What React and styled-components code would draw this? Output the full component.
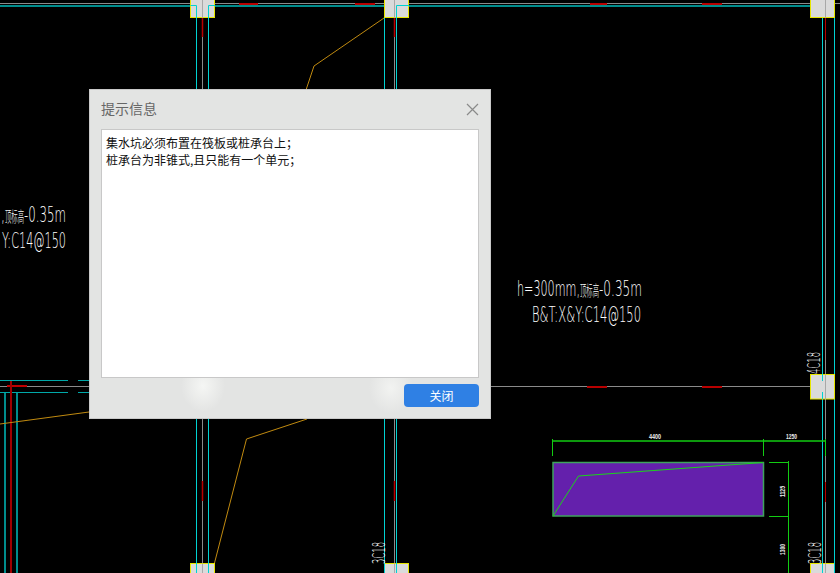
import React from "react";
import styled, { createGlobalStyle } from "styled-components";

const GlobalStyle = createGlobalStyle`
  html, body {
    margin: 0;
    padding: 0;
    background: #000;
  }
  body {
    font-family: "Noto Sans CJK SC", "Liberation Sans", sans-serif;
  }
`;

const CYAN = "#00d2d2";
const TEAL = "#008c8c";
const GREY = "#8a8a8a";
const RED = "#b80000";
const ORANGE = "#c08a10";
const GREEN = "#12cc12";
const YELLOW = "#e6e600";

/* column heads: box position, and which stretches of cyan run over the box */
const columns = [
  { x: 190.5, y: -7, grey: 202.5, cyan: [[196.5, 5.5, 18], [208.5, 5.5, 18]] },
  { x: 384.5, y: -7, grey: 394.5, cyan: [[396.5, 5.5, 18]] },
  { x: 810.5, y: -7, grey: 825.5, cyan: [] },
  { x: 810.5, y: 374.5, grey: 825.5, cyan: [[822.5, 374, 381], [822.5, 392, 399]] },
  { x: 190.5, y: 563.5, grey: 202.5, cyan: [[196.5, 563, 573], [208.5, 563, 573]] },
  { x: 384.5, y: 563.5, grey: 394.5, cyan: [[384.5, 563, 573], [396.5, 563, 573]] },
  { x: 810.5, y: 563.5, grey: 825.5, cyan: [[822.5, 563, 573], [834.5, 563, 573]] },
];

const lines = [
  // top beam
  [0, 3.5, 840, 3.5, GREY, 1],
  [0, 6, 190, 6, TEAL, 2],
  [215, 6, 384, 6, TEAL, 2],
  [409, 6, 811, 6, TEAL, 2],
  [239, 4, 258, 4, RED, 2],
  [355, 4, 375, 4, RED, 2],
  [590, 4, 607, 4, RED, 2],
  [702, 4, 722, 4, RED, 2],
  // verticals
  [196.5, 18, 196.5, 564, CYAN, 1],
  [208.5, 18, 208.5, 564, CYAN, 1],
  [202.5, 18, 202.5, 564, GREY, 1],
  [384.5, 18, 384.5, 564, CYAN, 1],
  [396.5, 18, 396.5, 564, CYAN, 1],
  [394.5, 18, 394.5, 564, GREY, 1],
  [822.5, 18, 822.5, 573, CYAN, 1],
  [834.5, 18, 834.5, 573, CYAN, 1],
  [825.5, 18, 825.5, 573, GREY, 1],
  [202.5, 18, 202.5, 37, RED, 1.5],
  [202.5, 481, 202.5, 501, RED, 1.5],
  [394.5, 18, 394.5, 37, RED, 1.5],
  [394.5, 481, 394.5, 501, RED, 1.5],
  [825.5, 18, 825.5, 40, RED, 1],
  [825.5, 482, 825.5, 502, RED, 1],
  // middle beam
  [0, 386.5, 811, 386.5, GREY, 1],
  [7, 386, 27, 386, "#c00000", 2],
  [587, 387, 607, 387, RED, 2],
  [702, 387, 722, 387, RED, 2],
  [0, 380.5, 68, 380.5, "#00a8a8", 1],
  [78, 380.5, 90, 380.5, "#00a8a8", 1],
  [0, 392.5, 68, 392.5, "#00a8a8", 1],
  [78, 392.5, 90, 392.5, "#00a8a8", 1],
  [5, 393, 5, 573, TEAL, 2],
  [11, 381, 11, 573, "#a00000", 2],
  [17, 393, 17, 573, TEAL, 2],
  // dimensions
  [553, 441, 825, 441, GREEN, 1.5],
  [552.5, 439, 552.5, 456, GREEN, 1],
  [763.5, 439, 763.5, 456, GREEN, 1],
  [825.5, 439, 825.5, 456, GREEN, 1],
  [788.5, 461, 788.5, 573, GREEN, 1],
  [769, 462.5, 789, 462.5, GREEN, 1],
  [769, 516.5, 789, 516.5, GREEN, 1],
];

/* drawn after the column boxes, the cyan caps run into them */
const caps = [
  [190.5, 5.5, 196.5, 5.5],
  [208.5, 5.5, 215, 5.5],
  [396.5, 5.5, 409, 5.5],
];

const orangeRuns = [
  "0,424 89,412",
  "306,90 314,66 384,18",
  "307,419 246.5,439 214.5,563",
];

/* CAD font is very narrow: nat is the width of the run before squeezing to w */
const notes = [
  { x: 517, y: 295.5, w: 63, nat: 119, size: 21, t: "h=300mm," },
  { x: 580, y: 295.5, w: 19, nat: 45, size: 15, t: "顶标高" },
  { x: 599, y: 295.5, w: 43, nat: 75, size: 21, t: "-0.35m" },
  { x: 532, y: 322, w: 109, nat: 190, size: 21, t: "B&T:X&Y:C14@150" },
  { x: 1, y: 222, w: 4, nat: 7, size: 21, t: "," },
  { x: 5, y: 222, w: 19, nat: 45, size: 15, t: "顶标高" },
  { x: 24, y: 222, w: 42, nat: 75, size: 21, t: "-0.35m" },
  { x: 2, y: 248, w: 64, nat: 114, size: 21, t: "Y:C14@150" },
];

const dims = [
  { x: 649, y: 439, w: 12, t: "4400" },
  { x: 786, y: 439, w: 11, t: "1250" },
];

const turned = [
  { x: 385, y: 564, w: 22, size: 17, t: "3C18" },
  { x: 821, y: 564, w: 22, size: 17, t: "3C18" },
  { x: 820, y: 374, w: 22, size: 17, t: "4C18" },
];

const turnedDims = [
  { x: 785, y: 497, w: 11, t: "1125" },
  { x: 785, y: 555, w: 11, t: "1300" },
];

const CadDrawing = () => (
  <Drawing viewBox="0 0 840 573" width="840" height="573">
    {lines.map(([x1, y1, x2, y2, color, w], i) => (
      <line key={i} x1={x1} y1={y1} x2={x2} y2={y2} stroke={color} strokeWidth={w} />
    ))}
    {orangeRuns.map((points) => (
      <polyline key={points} points={points} fill="none" stroke={ORANGE} strokeWidth="1" />
    ))}
    {columns.map((c, i) => (
      <g key={i}>
        <rect x={c.x} y={c.y} width="24" height="24.5" fill="#dadada" stroke={YELLOW} strokeWidth="1" />
        <line x1={c.grey} y1={c.y} x2={c.grey} y2={c.y + 25} stroke="#a8a8a8" />
        {c.cyan.map(([x, y1, y2]) => (
          <line key={y1 + "-" + x} x1={x} y1={y1} x2={x} y2={y2} stroke={CYAN} />
        ))}
      </g>
    ))}
    {caps.map(([x1, y1, x2, y2]) => (
      <line key={x1} x1={x1} y1={y1} x2={x2} y2={y2} stroke={CYAN} />
    ))}
    <polygon points="553,462.5 763.5,462.5 763.5,516 553,516" fill="#6420ac" stroke="#3ea35c" strokeWidth="1.5" />
    <polyline points="553,516 578.5,476 763,462.5" fill="none" stroke="#1bd41b" strokeWidth="1" />
    {notes.map((n) => (
      <CadText
        key={n.x + n.t}
        transform={`translate(${n.x} ${n.y}) scale(${n.w / n.nat} 1)`}
        fontSize={n.size}
        textLength={n.nat}
        lengthAdjust="spacingAndGlyphs"
      >
        {n.t}
      </CadText>
    ))}
    {turned.map((l) => (
      <CadText
        key={l.x + l.t}
        transform={`translate(${l.x} ${l.y}) rotate(-90)`}
        fontSize={l.size}
        textLength={l.w}
        lengthAdjust="spacingAndGlyphs"
      >
        {l.t}
      </CadText>
    ))}
    {dims.map((l) => (
      <DimText key={l.t} x={l.x} y={l.y} textLength={l.w} lengthAdjust="spacingAndGlyphs">
        {l.t}
      </DimText>
    ))}
    {turnedDims.map((l) => (
      <DimText
        key={l.t}
        transform={`translate(${l.x} ${l.y}) rotate(-90)`}
        textLength={l.w}
        lengthAdjust="spacingAndGlyphs"
      >
        {l.t}
      </DimText>
    ))}
  </Drawing>
);

const App = () => {
  return (
    <Page>
      <GlobalStyle />
      <CadDrawing />
      <Dialog>
        <TitleBar>
          <Title>提示信息</Title>
          <CloseIcon width="13" height="13" viewBox="0 0 13 13">
            <path d="M1 1 L12 12 M12 1 L1 12" stroke="#8a8a8a" strokeWidth="1.2" fill="none" />
          </CloseIcon>
        </TitleBar>
        <MessageBox>
          <div>集水坑必须布置在筏板或桩承台上；</div>
          <div>桩承台为非锥式,且只能有一个单元；</div>
        </MessageBox>
        <Footer>
          <CloseButton>关闭</CloseButton>
        </Footer>
      </Dialog>
    </Page>
  );
};

export default App;

const Page = styled.div`
  position: relative;
  width: 840px;
  height: 573px;
  overflow: hidden;
  background: #000;
`;

const Drawing = styled.svg`
  display: block;
`;

const CadText = styled.text`
  font-family: "DejaVu Sans", "Noto Sans CJK SC", sans-serif;
  font-weight: 200;
  fill: #fff;
`;

const DimText = styled.text`
  font-family: "Liberation Sans", sans-serif;
  font-size: 8px;
  font-weight: 700;
  fill: #f0f0f0;
`;

/* glows are the columns showing through the frosted window */
const Dialog = styled.div`
  position: absolute;
  left: 89px;
  top: 89px;
  width: 402px;
  height: 330px;
  box-sizing: border-box;
  display: flex;
  flex-direction: column;
  padding: 0 11px 11px;
  border: 1px solid #c9c9c9;
  background:
    radial-gradient(ellipse 22px 26px at 113px 296px, #f5f6f4 0%, rgba(245, 246, 244, 0) 100%),
    radial-gradient(ellipse 22px 26px at 301px 298px, #f2f3f1 0%, rgba(242, 243, 241, 0) 100%),
    #e3e4e3;
`;

const TitleBar = styled.div`
  height: 39px;
  flex: none;
  display: flex;
  align-items: center;
  justify-content: space-between;
`;

const Title = styled.span`
  margin-bottom: 3px;
  font-size: 14px;
  color: #666;
`;

const CloseIcon = styled.svg`
  display: block;
`;

const MessageBox = styled.div`
  flex: 1;
  box-sizing: border-box;
  padding: 4px;
  background: #fff;
  border: 1px solid #c8c8c8;
  font-size: 12px;
  line-height: 17px;
  color: #111;
`;

const Footer = styled.div`
  flex: none;
  display: flex;
  justify-content: flex-end;
  padding-top: 6px;
`;

const CloseButton = styled.button`
  width: 75px;
  height: 23px;
  padding: 0;
  border: 0;
  border-radius: 4px;
  background: #2f80e4;
  color: #fff;
  font-family: inherit;
  font-size: 12px;
`;
